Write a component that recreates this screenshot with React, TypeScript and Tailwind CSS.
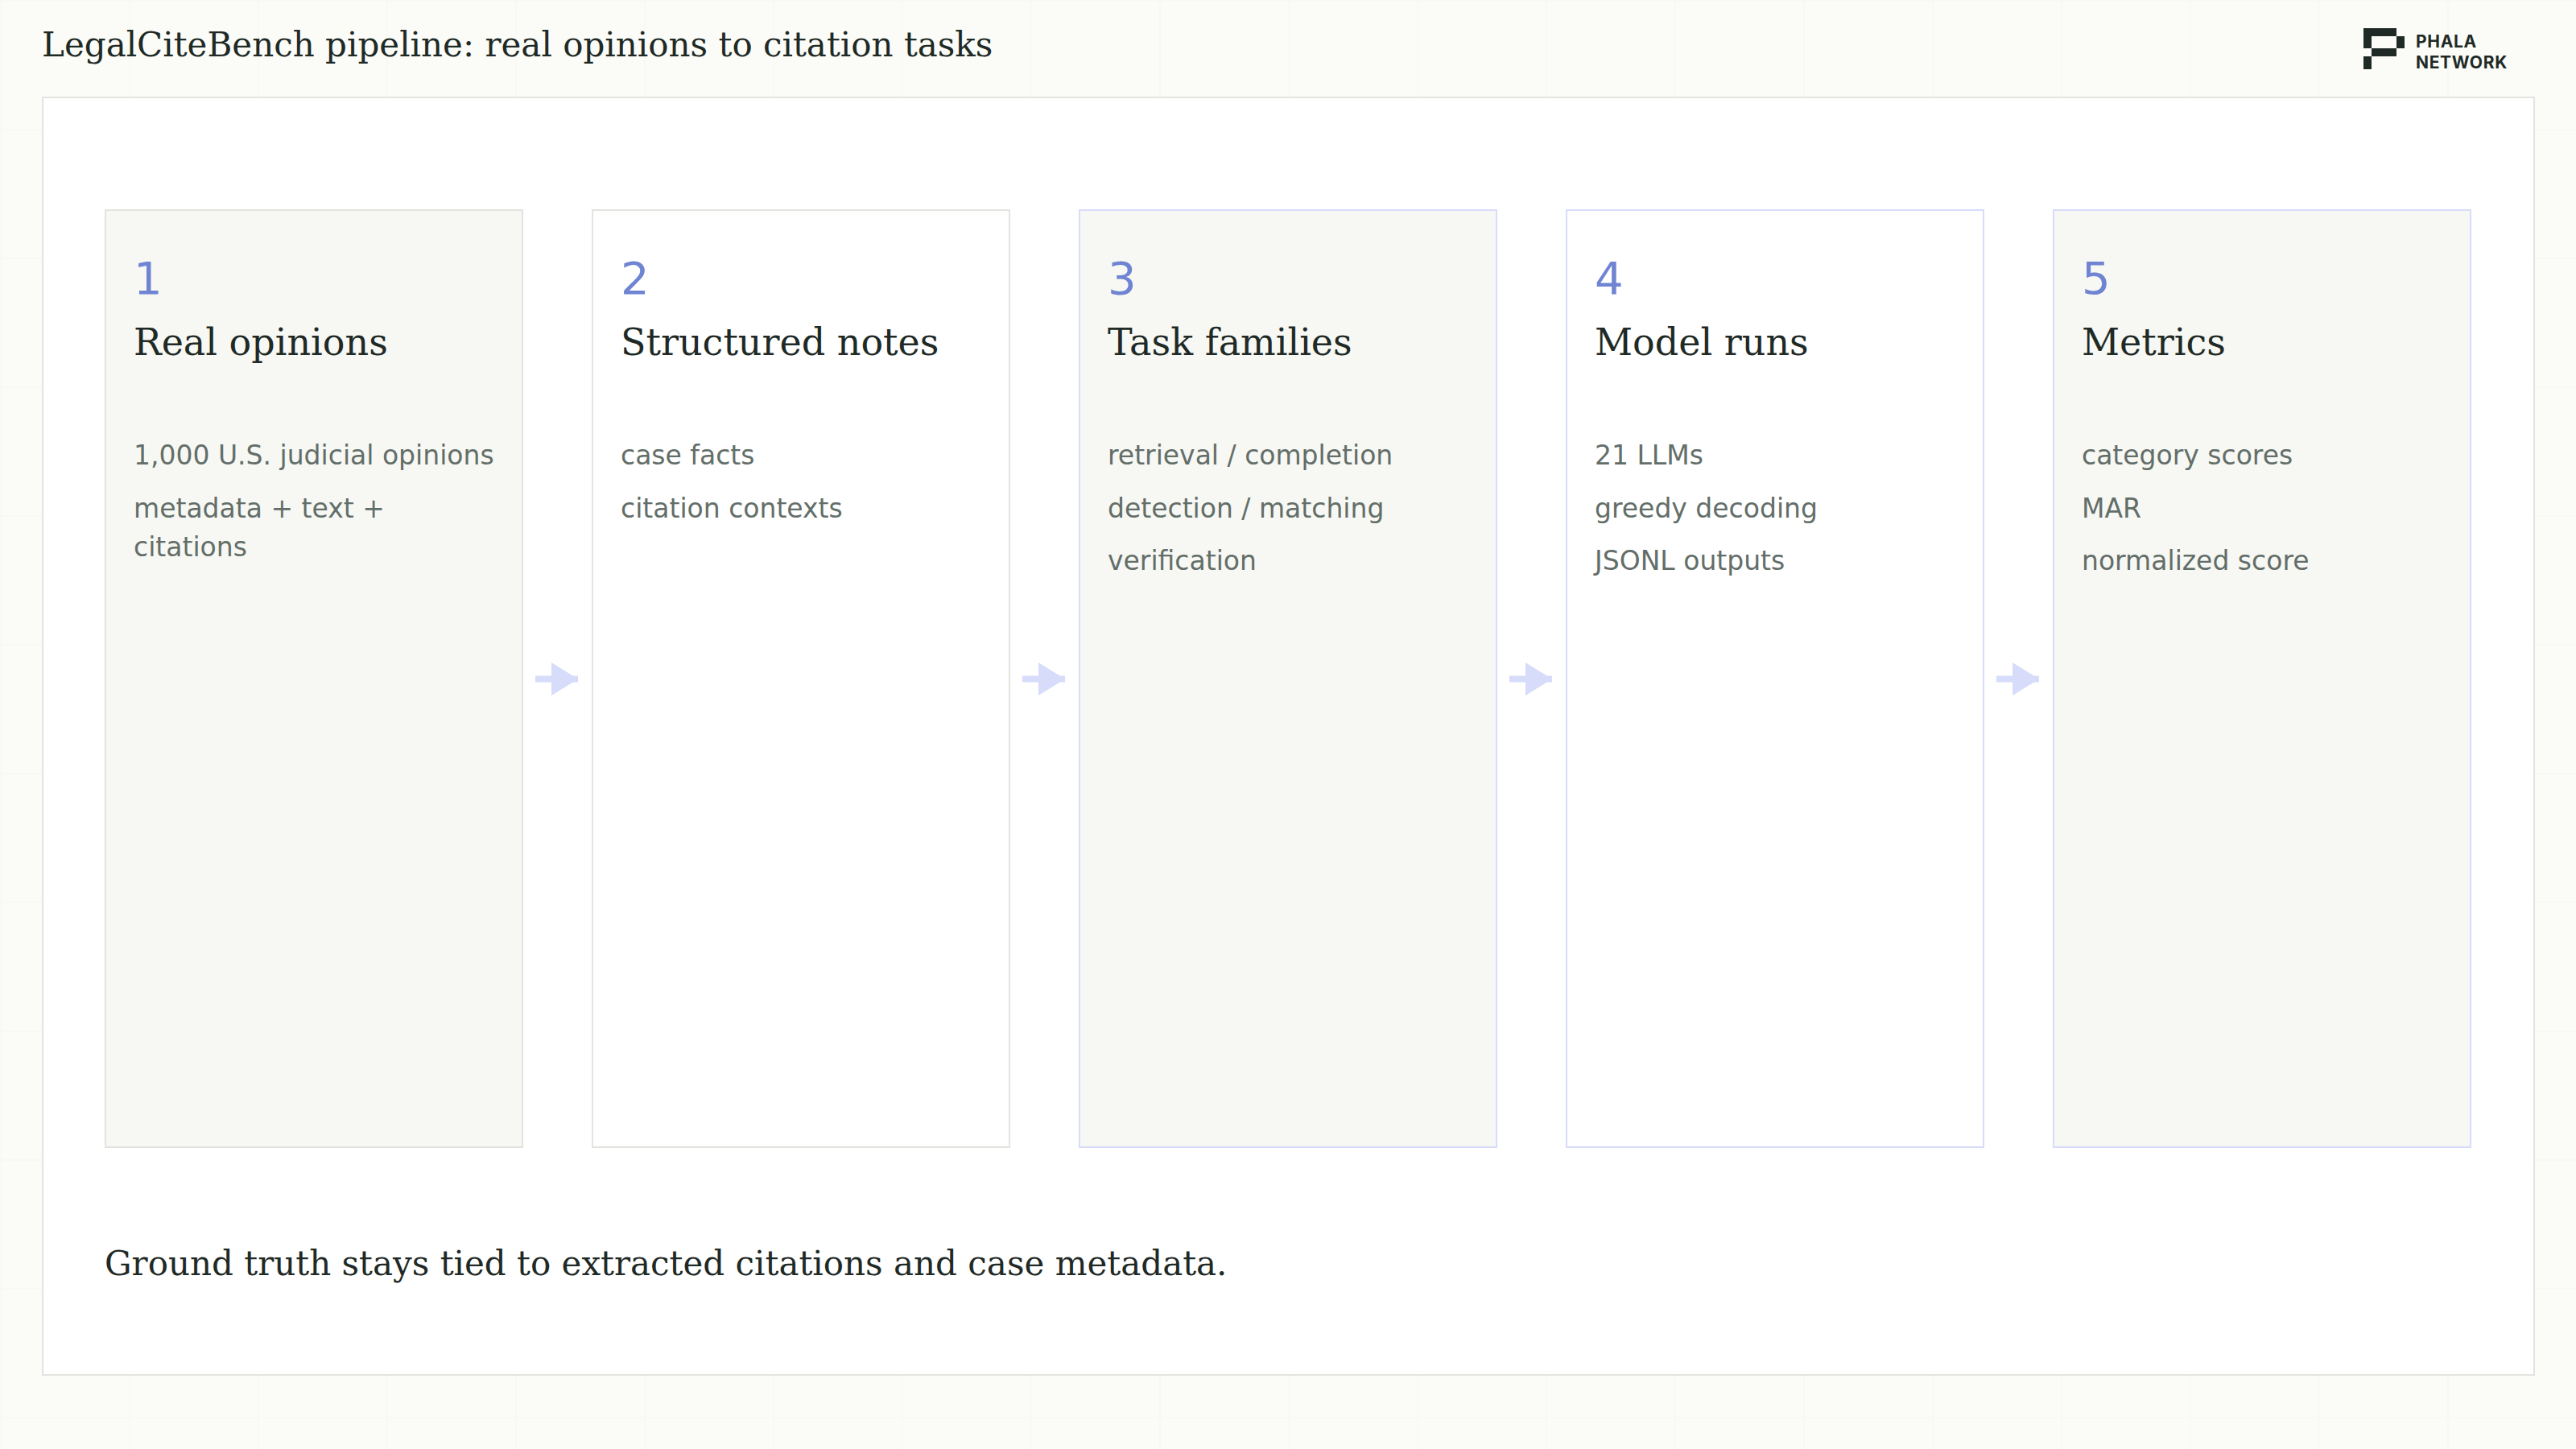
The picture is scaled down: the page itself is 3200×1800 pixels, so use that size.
const steps = [
  { n: 1, title: "Real opinions", lines: ["1,000 U.S. judicial opinions", "metadata + text + citations"], tint: true, blue: false },
  { n: 2, title: "Structured notes", lines: ["case facts", "citation contexts"], tint: false, blue: false },
  { n: 3, title: "Task families", lines: ["retrieval / completion", "detection / matching", "verification"], tint: true, blue: true },
  { n: 4, title: "Model runs", lines: ["21 LLMs", "greedy decoding", "JSONL outputs"], tint: false, blue: true },
  { n: 5, title: "Metrics", lines: ["category scores", "MAR", "normalized score"], tint: true, blue: true },
];

function PhalaLogo() {
  return (
    <div className="flex items-center gap-[14px]">
      <svg width="51" height="51" viewBox="0 0 51 51" fill="#1f2a26">
        <path d="M0 0H41V10H51V25H41V35H10V25H41V10H10V25H0Z" fillRule="evenodd" />
        <rect x="0" y="35" width="10" height="16" />
      </svg>
      <div className="mt-[10px] font-['Inter',sans-serif] text-[21px] leading-[26px] font-bold tracking-[0.7px] text-[#1f2a26]">
        <div>PHALA</div>
        <div>NETWORK</div>
      </div>
    </div>
  );
}

function Arrow() {
  return (
    <div className="flex flex-1 items-center justify-center pr-[2px]">
      <svg width="53" height="41" viewBox="0 0 53 41" fill="#d6dcfa">
        <rect x="0" y="16.5" width="53" height="8" />
        <path d="M20 0L53 20.5L20 41Z" />
      </svg>
    </div>
  );
}

function StepCard({ n, title, lines, tint, blue }: (typeof steps)[number]) {
  return (
    <div
      className={`flex w-[520px] flex-col border-2 px-[34px] pt-[50px] ${tint ? "bg-[#f7f8f4]" : "bg-white"} ${
        blue ? "border-[#d6dcfa]" : "border-[#e3e4df]"
      }`}
    >
      <div className="font-['DejaVu_Sans',sans-serif] text-[56px] leading-[68px] text-[#6f84d2]">{n}</div>
      <h2 className="mt-[14px] font-['DejaVu_Serif',serif] text-[46px] leading-[62px] font-normal text-[#1f2a26]">{title}</h2>
      <ul className="mt-[86px] flex flex-col gap-[17.5px] font-['DejaVu_Sans',sans-serif] text-[33px] leading-[48px] text-[#636e69]">
        {lines.map((line) => (
          <li key={line}>{line}</li>
        ))}
      </ul>
    </div>
  );
}

export default function App() {
  return (
    <div className="flex h-[1800px] w-[3200px] flex-col overflow-hidden bg-[#fbfcf8] bg-[linear-gradient(#f8f9f5_2px,transparent_2px),linear-gradient(90deg,#f8f9f5_2px,transparent_2px)] bg-[size:160px_160px]">
      <header className="flex h-[120px] items-center justify-between pr-[85px] pl-[52px]">
        <h1 className="-mt-[10px] font-['DejaVu_Serif',serif] text-[42px] font-normal text-[#1f2a26]">
          LegalCiteBench pipeline: real opinions to citation tasks
        </h1>
        <PhalaLogo />
      </header>
      <main className="mr-[51px] ml-[52px] flex h-[1589px] flex-col border-2 border-[#e3e4df] bg-white pr-[77px] pl-[76px] pt-[138px]">
        <div className="flex h-[1166px]">
          {steps.map((step, i) => (
            <div key={step.n} className={`flex ${i < 4 ? "flex-1" : ""}`}>
              <StepCard {...step} />
              {i < 4 && <Arrow />}
            </div>
          ))}
        </div>
        <p className="mt-[114px] font-['DejaVu_Serif',serif] text-[42px] leading-[60px] text-[#1f2a26]">
          Ground truth stays tied to extracted citations and case metadata.
        </p>
      </main>
    </div>
  );
}
